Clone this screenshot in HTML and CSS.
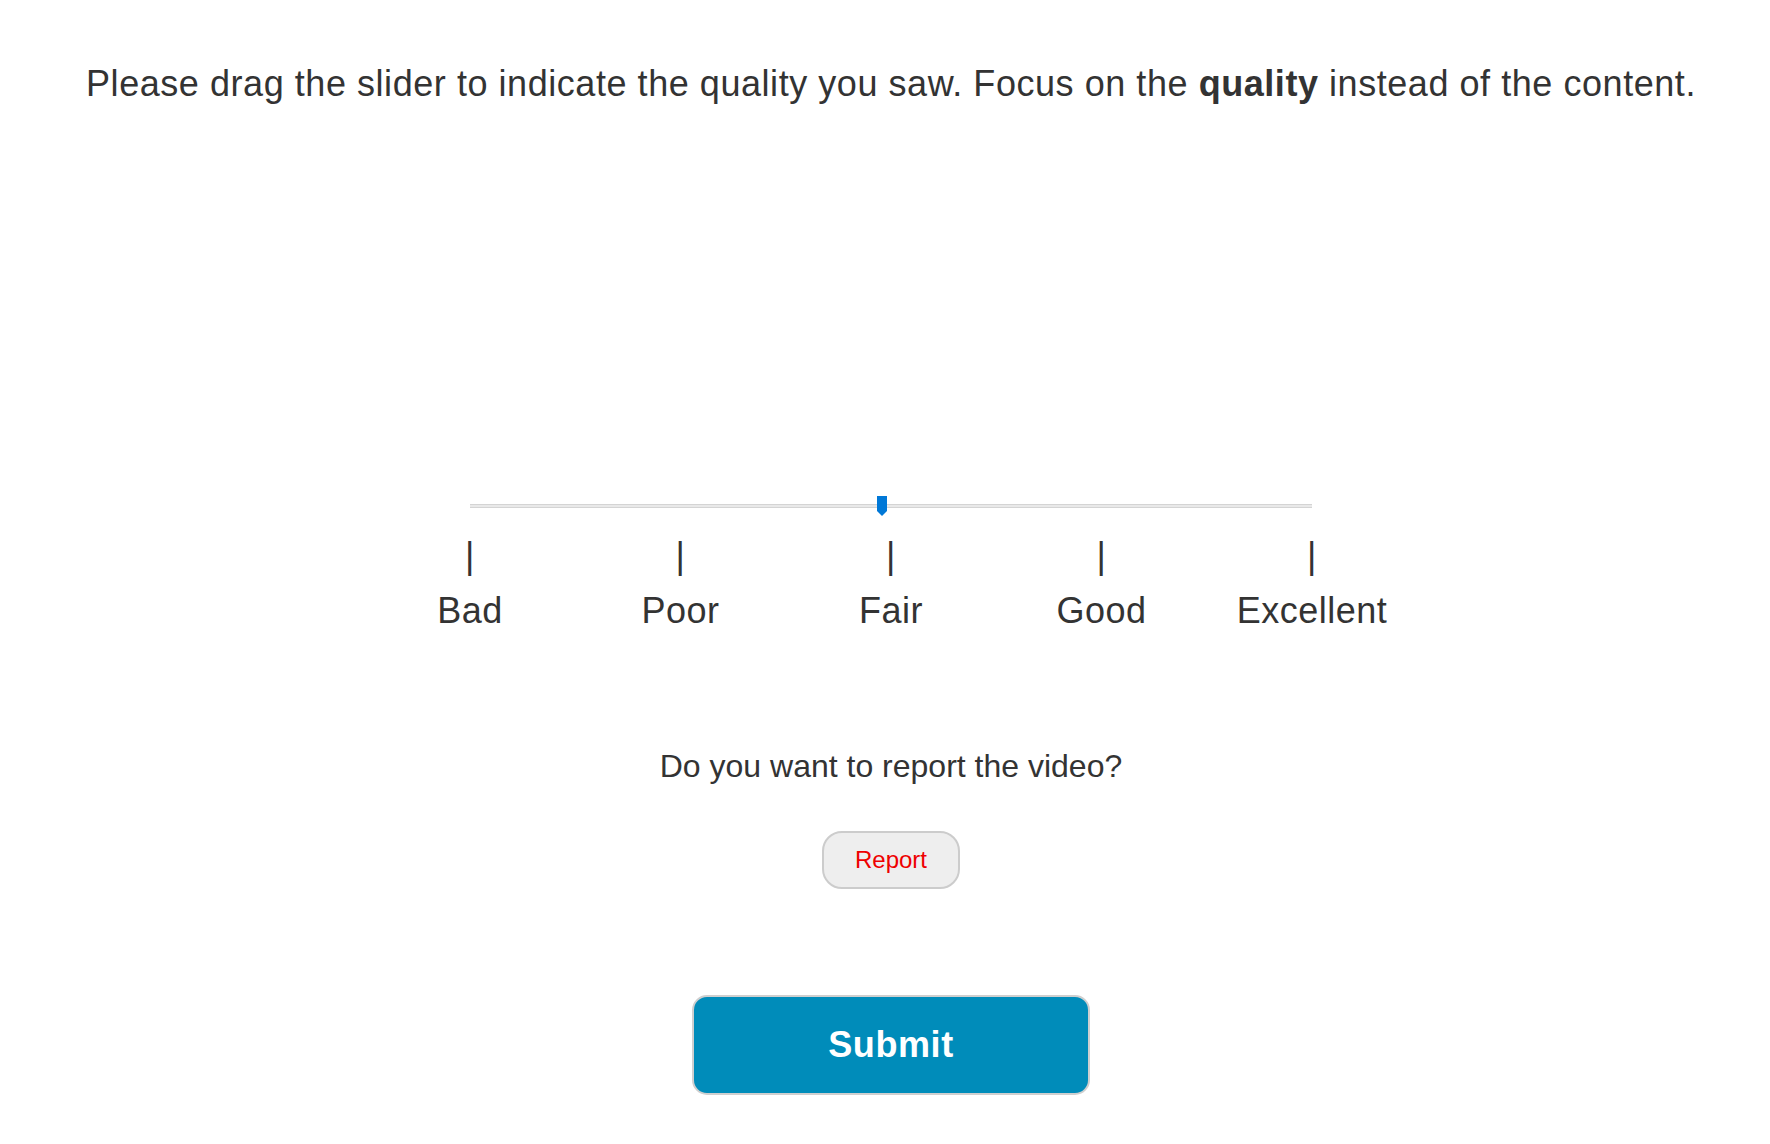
FILE: index.html
```html
<!DOCTYPE html>
<html lang="en">
<head>
<meta charset="utf-8">
<title>Quality rating</title>
<link rel="stylesheet" href="styles.css">
</head>
<body>
<main class="page">
  <p class="prompt">Please drag the slider to indicate the quality you saw. Focus on the <b>quality</b> instead of the content.</p>

  <div class="rating">
    <div class="slider">
      <div class="track"></div>
      <svg class="thumb" width="10" height="20" viewBox="0 0 10 20" aria-hidden="true">
        <polygon points="0,0 10,0 10,15 5,20 0,15" fill="#0078d7"/>
      </svg>
    </div>
    <div class="scale">
      <div class="mark"><span class="tick">|</span><span class="label">Bad</span></div>
      <div class="mark"><span class="tick">|</span><span class="label">Poor</span></div>
      <div class="mark"><span class="tick">|</span><span class="label">Fair</span></div>
      <div class="mark"><span class="tick">|</span><span class="label">Good</span></div>
      <div class="mark"><span class="tick">|</span><span class="label">Excellent</span></div>
    </div>
  </div>

  <p class="question">Do you want to report the video?</p>
  <button class="report" type="button">Report</button>
  <button class="submit" type="button">Submit</button>
</main>
</body>
</html>
```

FILE: styles.css
```css
html, body {
  margin: 0;
  padding: 0;
  background: #ffffff;
}

body {
  font-family: "Liberation Sans", Arial, sans-serif;
  color: #333333;
}

.page {
  padding-left: 12px;
  display: flex;
  flex-direction: column;
  align-items: center;
}

.prompt {
  margin: 63px 0 0 0;
  font-size: 36px;
  letter-spacing: 0.55px;
  line-height: normal;
  text-align: center;
  white-space: nowrap;
}

.prompt b {
  font-weight: bold;
}

.rating {
  margin-top: 391px;
  display: flex;
  flex-direction: column;
  align-items: center;
}

.slider {
  position: relative;
  width: 842px;
  height: 20px;
  display: flex;
  align-items: center;
}

.track {
  width: 100%;
  height: 2px;
  border: 1px solid #d4d4d4;
  border-left: 0;
  border-right: 0;
  background: #e9e9e9;
  box-sizing: content-box;
}

.thumb {
  position: absolute;
  left: 407px;
  top: 0;
  display: block;
}

.scale {
  margin-top: 12px;
  width: 1052.5px;
  display: grid;
  grid-template-columns: repeat(5, 1fr);
}

.mark {
  display: flex;
  flex-direction: column;
  align-items: center;
  font-size: 36px;
  letter-spacing: 0.5px;
  line-height: 55px;
}

.question {
  margin: 110px 0 0 0;
  font-size: 32px;
  line-height: normal;
}

.report {
  margin-top: 46px;
  width: 138px;
  height: 58px;
  border: 2px solid #cccccc;
  border-radius: 20px;
  background: #eeeeee;
  color: #ee0000;
  font-family: "Liberation Sans", Arial, sans-serif;
  font-size: 24px;
  padding: 0;
}

.submit {
  margin-top: 106px;
  width: 398px;
  height: 100px;
  border: 2px solid #cfcfcf;
  border-radius: 15px;
  background: #008cba;
  color: #ffffff;
  font-family: "Liberation Sans", Arial, sans-serif;
  font-size: 36px;
  font-weight: bold;
  letter-spacing: 0.6px;
  padding: 0;
}
```
